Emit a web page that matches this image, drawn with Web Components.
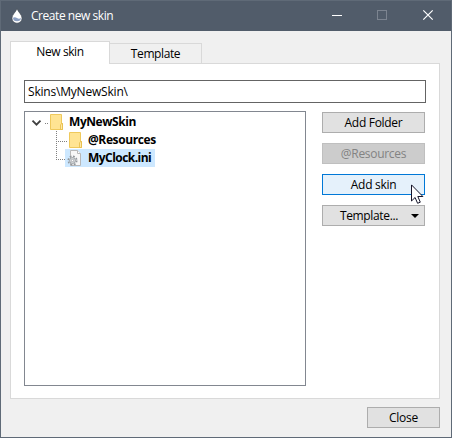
<!DOCTYPE html>
<html lang="en">
<head>
<meta charset="utf-8">
<title>Create new skin</title>
<style>
html,body{margin:0;height:100%}
body{font:12px/16px "Open Sans","Noto Sans",sans-serif;color:#000;overflow:hidden}
</style>
</head>
<body>
<skin-window></skin-window>
<script>
const define = (name, html) => customElements.define(name, class extends HTMLElement {
  constructor() {
    super();
    this.attachShadow({mode: 'open'}).innerHTML = html;
  }
});

define('title-bar', `
<style>
:host{display:flex;align-items:center;height:30px;background:#515c6a;color:#fff;padding-left:10px}
.drop{width:12px;height:16px;flex:none}
.t{margin-left:8px;flex:1;letter-spacing:-.45px;white-space:nowrap}
.c{width:46px;height:30px;flex:none}
</style>
<svg class="drop" viewBox="0 0 12 16"><path d="M6 .5C5 4 1 6.500 1 10.200A5 5 0 0 0 11 10.200C11 6.500 7 4 6 .5Z" fill="#fff" stroke="#3f4853" stroke-width=".6"/><path d="M2 9.700Q4 8.700 6 10T10 10A4 3.500 0 0 1 6 13.200A4 3.500 0 0 1 2 9.700Z" fill="#8b9fc2"/></svg>
<span class="t"><slot></slot></span>
<svg class="c" viewBox="0 0 46 30"><path d="M19 14.500h10" stroke="#fff"/></svg>
<svg class="c" viewBox="0 0 46 30"><rect x="18.500" y="9.500" width="9" height="9" fill="none" stroke="#7c8490"/></svg>
<svg class="c" viewBox="0 0 46 30"><path d="M18.300 9.300l9.400 9.400M27.700 9.300l-9.400 9.400" stroke="#fff" stroke-width="1.200"/></svg>
`);

define('tab-item', `
<style>
:host{display:block;box-sizing:border-box;width:92px;height:20px;border:1px solid #d9d9d9;border-left:0;border-bottom:0;background:#f0f0f0;text-align:center;line-height:20px;letter-spacing:-.4px}
:host([selected]){width:100px;height:23px;border-left:1px solid #d9d9d9;background:#fff;margin-bottom:-1px;line-height:20px;position:relative}
</style><slot></slot>`);

define('push-button', `
<style>
:host{display:flex;align-items:center;justify-content:center;box-sizing:border-box;height:21px;width:103px;border:1px solid #adadad;background:#e1e1e1;line-height:19px;white-space:nowrap;letter-spacing:-.3px}
:host([disabled]){background:#ccc;border-color:#bfbfbf;color:#838383}
:host([hot]){background:#e5f1fb;border-color:#0078d7}
:host([small]){width:73px}
</style><slot></slot>`);

define('text-field', `
<style>
:host{display:block;box-sizing:border-box;width:402px;height:23px;border:1px solid #646464;background:#fff;padding-left:3px;line-height:21px;letter-spacing:-.2px}
</style><slot></slot>`);

define('folder-icon', `
<style>:host{display:block;width:14px;height:16px}svg{display:block}</style>
<svg width="14" height="16" viewBox="0 0 14 16"><path d="M.5.5h11v9h1v6H.5z" fill="#ffe493" stroke="#efc95c"/><path d="M10.500 15.500V11l1-1.500h1v6z" fill="#ffe9a8" stroke="#e6bb45" stroke-width=".8"/></svg>`);

define('ini-icon', `
<style>:host{display:block;width:16px;height:16px}svg{display:block}</style>
<svg width="16" height="16" viewBox="0 0 16 16"><path d="M3.500.5h7l3 3v12h-10z" fill="#f7f7f7" stroke="#b8b8b8"/><path d="M10.500.5v3h3" fill="#fff" stroke="#b8b8b8"/><circle cx="5.500" cy="10.500" r="4.300" fill="none" stroke="#92979c" stroke-width="1.500" stroke-dasharray="1.850 1.527"/><circle cx="5.500" cy="10.500" r="3" fill="#d9dcde" stroke="#92979c" stroke-width=".9"/><circle cx="5.500" cy="10.500" r="1.200" fill="#fff" stroke="#92979c" stroke-width=".7"/></svg>`);

define('tree-row', `
<style>
:host{display:flex;height:18px;align-items:center;font-weight:700;line-height:18px;white-space:nowrap}
.in{display:flex;align-items:center;height:18px}
:host([selected]) .in{background:#cde8ff}
.l{padding:0 4px 0 5px;letter-spacing:var(--ls,-.3px)}
</style><slot name="lines"></slot><div class="in"><slot name="icon"></slot><span class="l"><slot></slot></span></div>`);

define('skin-tree', `
<style>
:host{display:block;box-sizing:border-box;width:282px;height:275px;border:1px solid #828790;background:#fff;padding-top:1px}
svg{display:block;flex:none}
</style>
<tree-row style="--ls:-.43px"><svg slot="lines" width="25" height="18"><path d="M7.500 7.700l4 4 4-4" fill="none" stroke="#404040" stroke-width="1.900"/><path d="M20 10.500h4" stroke="#808080" stroke-dasharray="1 1"/></svg><folder-icon slot="icon"></folder-icon>MyNewSkin</tree-row>
<tree-row style="--ls:-.4px"><svg slot="lines" width="44" height="18"><path d="M31.500 0v18M33 10.500h10" fill="none" stroke="#808080" stroke-dasharray="1 1"/></svg><folder-icon slot="icon"></folder-icon>@Resources</tree-row>
<tree-row selected style="--ls:-.54px"><svg slot="lines" width="40" height="18"><path d="M31.500 0v11M33 10.500h7" fill="none" stroke="#808080" stroke-dasharray="1 1"/></svg><ini-icon slot="icon" style="padding:0 1px 0 2px;margin-right:-1px"></ini-icon>MyClock.ini</tree-row>
`);

define('mouse-pointer', `
<style>:host{position:absolute;left:410px;top:183px}svg{display:block}</style>
<svg width="13" height="21" viewBox="0 0 13 21"><path d="M.5.9V17L4.100 13.500 6.600 19.300 9.300 18.200 6.800 12.500H11.900Z" fill="#fff" stroke="#15152a"/></svg>`);

define('skin-window', `
<style>
:host{display:flex;flex-direction:column;box-sizing:border-box;width:452px;height:438px;border:1px solid #5f6a77;background:#f0f0f0;position:relative}
.tabs{display:flex;align-items:flex-end;margin:10px 0 0 9px;height:22px}
.page{box-sizing:border-box;margin-left:9px;width:430px;height:336px;border:1px solid #d9d9d9;background:#fff;padding:16px 13px}
.body{display:flex;gap:16px;margin-top:8px}
.buttons{display:flex;flex-direction:column;gap:10px;padding-top:1px}
.foot{display:flex;justify-content:flex-end;padding:8px 11px 0 0}
.arrow{width:8px;height:4px;margin-left:13px;margin-right:-8px}
.dd{margin-left:4px;letter-spacing:-.35px}
</style>
<title-bar>Create new skin</title-bar>
<div class="tabs"><tab-item selected>New skin</tab-item><tab-item>Template</tab-item></div>
<div class="page">
<text-field>Skins\\MyNewSkin\\</text-field>
<div class="body"><skin-tree></skin-tree>
<div class="buttons"><push-button>Add Folder</push-button><push-button disabled>@Resources</push-button><push-button hot>Add skin</push-button><push-button><span class="dd">Template...</span><svg class="arrow" viewBox="0 0 8 4"><path d="M0 0h8L4 4z"/></svg></push-button></div></div>
</div>
<div class="foot"><push-button small>Close</push-button></div>
<mouse-pointer></mouse-pointer>
`);
</script>
</body>
</html>
